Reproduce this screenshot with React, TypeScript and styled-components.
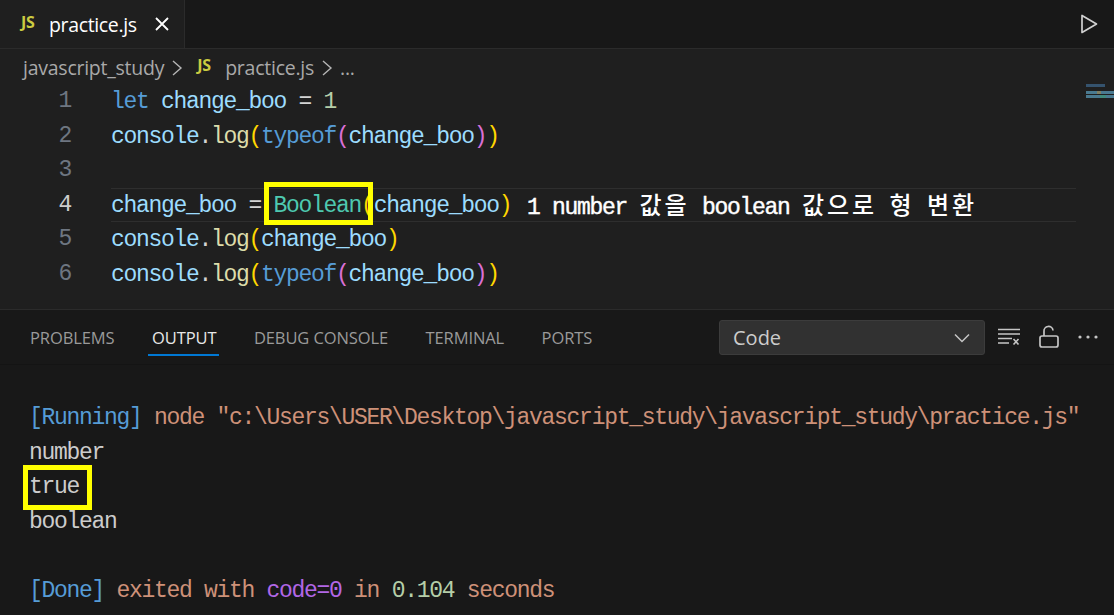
import React from "react";
import styled, { createGlobalStyle } from "styled-components";

const Global = createGlobalStyle`
  html, body { margin: 0; padding: 0; background: #181818; }
  #root { width: 1114px; height: 615px; overflow: hidden; }
`;

const mono = `"Liberation Mono", "DejaVu Sans Mono", "Noto Sans CJK KR", monospace`;
const ui = `"Open Sans", "Noto Sans", sans-serif`;

const Page = styled.div`
  position: relative;
  width: 1114px;
  height: 615px;
  display: flex;
  flex-direction: column;
  background: #181818;
  overflow: hidden;
`;

const TabBar = styled.div`
  height: 48px;
  display: flex;
  align-items: stretch;
  justify-content: space-between;
  background: #181818;
  border-bottom: 1px solid #2b2b2b;
`;

const Tab = styled.div`
  width: 185px;
  box-sizing: border-box;
  display: flex;
  align-items: center;
  padding-left: 21px;
  background: #1f1f1f;
  border-right: 1px solid #2b2b2b;
  color: #fff;
  font: 400 19.5px ${ui};
  letter-spacing: -0.35px;
`;

const JsIcon = styled.span`
  color: #cbcb41;
  font: 700 16px ${ui};
  letter-spacing: -0.2px;
  width: 28px;
  flex: none;
  margin-top: -5px;
`;

const Close = styled.span`
  display: flex;
  margin-left: 16px;
  color: #fff;
`;

const RunButton = styled.div`
  display: flex;
  align-items: center;
  padding-right: 15px;
`;

const Editor = styled.div`
  height: 260px;
  display: flex;
  flex-direction: column;
  background: #1f1f1f;
  position: relative;
`;

const Crumbs = styled.div`
  height: 37px;
  margin-bottom: -2px;
  display: flex;
  align-items: center;
  padding-left: 23px;
  color: #a9a9a9;
  font: 400 19.5px ${ui};
  letter-spacing: -0.25px;
`;

const CrumbSep = styled.span`
  display: flex;
  margin: 0 6px 0 6px;
  color: #b5b5b5;
`;

const CrumbJs = styled(JsIcon)`
  margin-left: 7px;
  margin-top: -6px;
`;

const Line = styled.div`
  height: 34.5px;
  display: flex;
  align-items: center;
  box-sizing: border-box;
  font: 400 23px ${mono};
  letter-spacing: -1.3px;
  white-space: pre;
`;

const LineNo = styled.span<{ $current?: boolean }>`
  width: 71px;
  flex: none;
  text-align: right;
  color: ${(p) => (p.$current ? "#cccccc" : "#6e7681")};
`;

const Code = styled.span<{ $current?: boolean }>`
  margin-left: 40px;
  width: 965px;
  height: 34px;
  line-height: 34px;
  box-sizing: border-box;
  border-top: 1px solid ${(p) => (p.$current ? "#2e2e2e" : "transparent")};
  border-bottom: 1px solid ${(p) => (p.$current ? "#2e2e2e" : "transparent")};
  color: #9cdcfe;
`;

const Tok = styled.span<{ $c: string }>`
  color: ${(p) => p.$c};
`;

const Minimap = styled.svg`
  position: absolute;
  right: 0;
  top: 35px;
`;

const PanelHead = styled.div`
  height: 55px;
  display: flex;
  align-items: stretch;
  background: #181818;
  border-top: 1px solid #2b2b2b;
  box-sizing: border-box;
`;

const PanelTabs = styled.div`
  display: flex;
  gap: 37.5px;
  padding-left: 30px;
  flex: 1;
`;

const PanelTab = styled.div<{ $active?: boolean }>`
  position: relative;
  display: flex;
  align-items: center;
  height: 44px;
  margin-top: 5px;
  color: ${(p) => (p.$active ? "#e7e7e7" : "#9a9a9a")};
  font: 400 16.5px ${ui};
  letter-spacing: -0.1px;
  ${(p) =>
    p.$active
      ? `&::after { content: ""; position: absolute; left: -4px; right: -3px; bottom: 3px; height: 2px; background: #0078d4; }`
      : ""}
`;

const Select = styled.div`
  width: 266px;
  height: 35px;
  box-sizing: border-box;
  margin: 10px 0 0 0;
  display: flex;
  align-items: center;
  justify-content: space-between;
  padding: 0 13px;
  background: #313131;
  border: 1px solid #3c3c3c;
  border-radius: 3px;
  color: #cccccc;
  font: 400 20px ${ui};
`;

const Actions = styled.div`
  width: 129px;
  display: flex;
  align-items: center;
  gap: 17px;
  padding: 0 0 0 12px;
  box-sizing: border-box;
  color: #c5c5c5;
`;

const Output = styled.div`
  flex: 1;
  padding-top: 37px;
  background: #181818;
  box-shadow: inset 0 1px 0 #141414;
`;

const OutLine = styled.div`
  height: 34.55px;
  padding-left: 29px;
  font: 400 23px/34.55px ${mono};
  letter-spacing: -1.3px;
  white-space: pre;
  color: #cccccc;
`;

const Marker = styled.div<{ $l: number; $t: number; $w: number; $h: number }>`
  position: absolute;
  left: ${(p) => p.$l}px;
  top: ${(p) => p.$t}px;
  width: ${(p) => p.$w}px;
  height: ${(p) => p.$h}px;
  box-sizing: border-box;
  border: 5px solid #ffff00;
`;

const Note = styled.div`
  position: absolute;
  left: 527px;
  top: 190px;
  color: #ffffff;
  font: 400 23px/28px ${mono};
  letter-spacing: -1.3px;
  -webkit-text-stroke: 0.4px #ffffff;
  white-space: pre;
`;

const Hangul = styled.span`
  font: 500 24px/28px "Noto Sans CJK KR", sans-serif;
  letter-spacing: 2.9px;
  -webkit-text-stroke: 0;
`;

const K = "#569cd6";
const V = "#9cdcfe";
const F = "#dcdcaa";
const Y = "#ffd700";
const P = "#da70d6";
const T = "#4ec9b0";
const N = "#b5cea8";
const W = "#d4d4d4";
const S = "#ce9178";

const Chevron = () => (
  <svg width="14" height="20" viewBox="0 0 14 20" fill="none" stroke="currentColor" strokeWidth="1.4">
    <path d="M3 3l8 7-8 7" />
  </svg>
);

const LogLine = ({ typed }: { typed?: boolean }) => (
  <>
    <Tok $c={V}>console</Tok>
    <Tok $c={W}>.</Tok>
    <Tok $c={F}>log</Tok>
    <Tok $c={Y}>(</Tok>
    {typed ? (
      <>
        <Tok $c={K}>typeof</Tok>
        <Tok $c={P}>(</Tok>
        <Tok $c={V}>change_boo</Tok>
        <Tok $c={P}>)</Tok>
      </>
    ) : (
      <Tok $c={V}>change_boo</Tok>
    )}
    <Tok $c={Y}>)</Tok>
  </>
);

const lines: React.ReactNode[] = [
  <>
    <Tok $c={K}>let</Tok> <Tok $c={V}>change_boo</Tok> <Tok $c={W}>=</Tok> <Tok $c={N}>1</Tok>
  </>,
  <LogLine typed />,
  <> </>,
  <>
    <Tok $c={V}>change_boo</Tok> <Tok $c={W}>=</Tok> <Tok $c={T}>Boolean</Tok>
    <Tok $c={Y}>(</Tok>
    <Tok $c={V}>change_boo</Tok>
    <Tok $c={Y}>)</Tok>
  </>,
  <LogLine />,
  <LogLine typed />,
];

export default function App() {
  return (
    <Page>
      <Global />
      <TabBar>
        <Tab>
          <JsIcon>JS</JsIcon>
          practice.js
          <Close>
            <svg width="18" height="18" viewBox="0 0 18 18" stroke="currentColor" strokeWidth="1.8" fill="none">
              <path d="M3 3l12 12M15 3L3 15" />
            </svg>
          </Close>
        </Tab>
        <RunButton>
          <svg width="20" height="24" viewBox="0 0 20 24" fill="none" stroke="#d0d0d0" strokeWidth="1.7">
            <path d="M3 3.5v17L17.5 12z" strokeLinejoin="round" />
          </svg>
        </RunButton>
      </TabBar>
      <Editor>
        <Crumbs>
          javascript_study
          <CrumbSep>
            <Chevron />
          </CrumbSep>
          <CrumbJs>JS</CrumbJs>
          practice.js
          <CrumbSep>
            <Chevron />
          </CrumbSep>
          ...
        </Crumbs>
        {lines.map((l, i) => (
          <Line key={i}>
            <LineNo $current={i === 3}>{i + 1}</LineNo>
            <Code $current={i === 3}>{l}</Code>
          </Line>
        ))}
        <Minimap width="29" height="15" viewBox="0 0 29 15">
          <rect x="1" y="0" width="19" height="3" fill="#35536e" />
          <rect x="1" y="7" width="28" height="3" fill="#4a7a90" />
          <rect x="12" y="7" width="4" height="3" fill="#7f8064" />
          <rect x="1" y="11" width="28" height="3" fill="#4a7a90" />
          <rect x="15" y="11" width="6" height="3" fill="#3f8a7c" />
        </Minimap>
      </Editor>
      <PanelHead>
        <PanelTabs>
          <PanelTab>PROBLEMS</PanelTab>
          <PanelTab $active>OUTPUT</PanelTab>
          <PanelTab>DEBUG CONSOLE</PanelTab>
          <PanelTab>TERMINAL</PanelTab>
          <PanelTab>PORTS</PanelTab>
        </PanelTabs>
        <Select>
          Code
          <svg width="18" height="12" viewBox="0 0 18 12" fill="none" stroke="#c5c5c5" strokeWidth="1.5">
            <path d="M2 2.5l7 7 7-7" />
          </svg>
        </Select>
        <Actions>
          <svg width="24" height="20" viewBox="0 0 24 20" fill="none" stroke="currentColor" strokeWidth="1.6">
            <path d="M1 2.5h22M1 7h22M1 11.5h14M1 16h11" />
            <path d="M16.5 12l5 5.5M21.5 12l-5 5.5" />
          </svg>
          <svg width="22" height="24" viewBox="0 0 22 24" fill="none" stroke="currentColor" strokeWidth="1.7">
            <rect x="2" y="11" width="18" height="11" rx="2" />
            <path d="M6 11V6.5a4.5 4.5 0 0 1 9-1" />
          </svg>
          <svg width="22" height="6" viewBox="0 0 22 6" fill="currentColor">
            <circle cx="3" cy="3" r="1.6" />
            <circle cx="11" cy="3" r="1.6" />
            <circle cx="19" cy="3" r="1.6" />
          </svg>
        </Actions>
      </PanelHead>
      <Output>
        <OutLine>
          <Tok $c={K}>[Running]</Tok> <Tok $c={S}>node "c:\Users\USER\Desktop\javascript_study\javascript_study\practice.js"</Tok>
        </OutLine>
        <OutLine>number</OutLine>
        <OutLine>true</OutLine>
        <OutLine>boolean</OutLine>
        <OutLine> </OutLine>
        <OutLine>
          <Tok $c={K}>[Done]</Tok> <Tok $c={S}>exited with</Tok> <Tok $c="#b267e6">code=0</Tok> <Tok $c={S}>in</Tok>{" "}
          <Tok $c={N}>0.104</Tok> <Tok $c={S}>seconds</Tok>
        </OutLine>
      </Output>
      <Marker $l={264} $t={182} $w={109} $h={43} />
      <Marker $l={23} $t={465} $w={69} $h={45} />
      <Note>
        1 number <Hangul>값을</Hangul> boolean <Hangul>값으로</Hangul> <Hangul>형</Hangul> <Hangul>변환</Hangul>
      </Note>
    </Page>
  );
}
